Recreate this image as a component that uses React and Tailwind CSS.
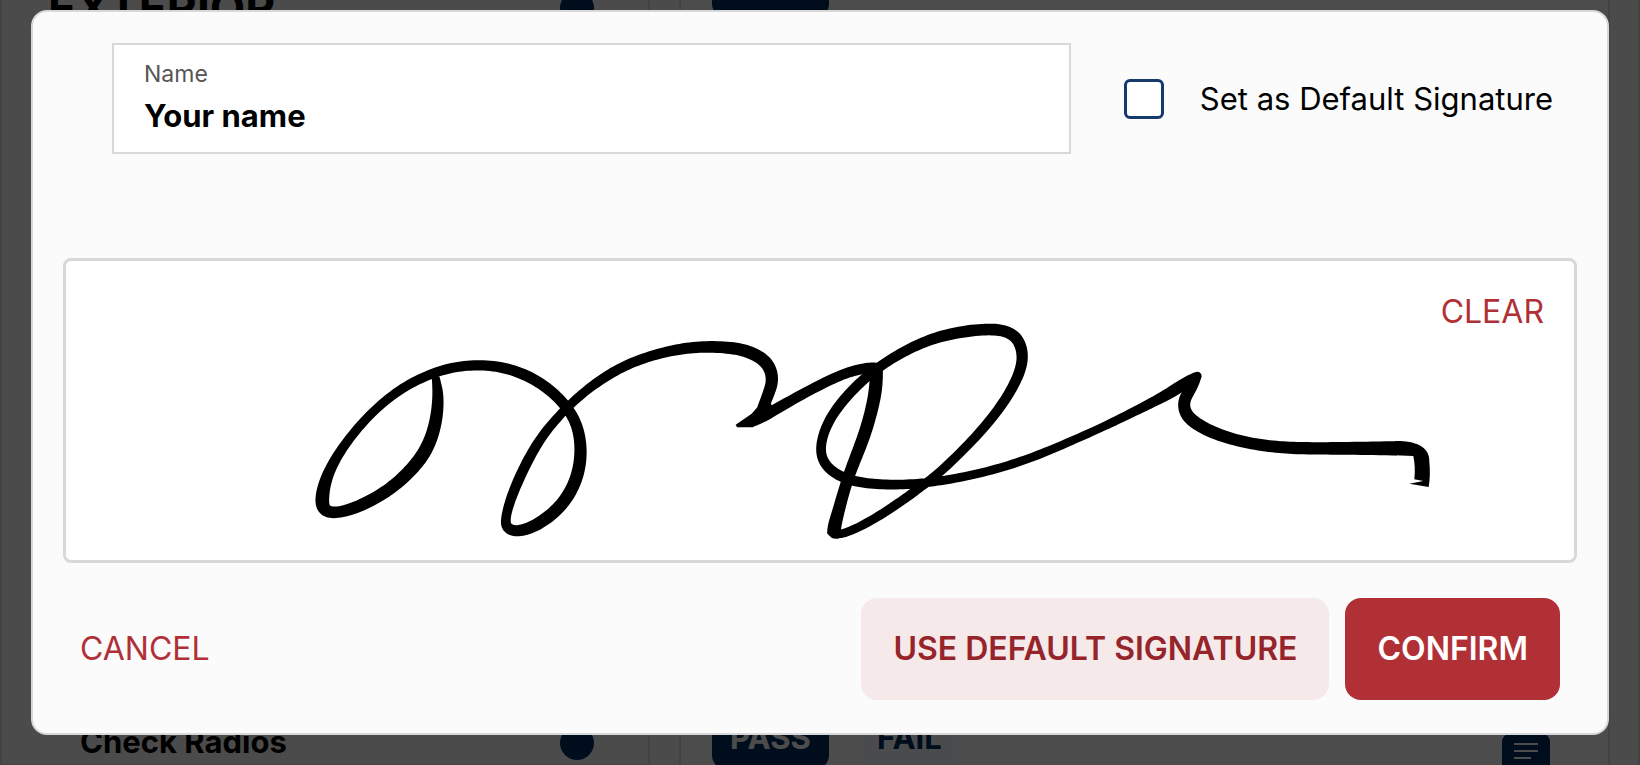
import { useState } from 'react';

// Pen strokes as [x, y, width] samples
const STROKES = [
  [
    [406, 196, 22], [412, 235, 30], [414, 275, 35], [406, 345, 38], [381, 415, 40], [346, 465, 40], [299, 513, 38],
    [240, 557, 37], [165, 594, 36], [105, 609, 34], [73, 599, 38], [66, 570, 42], [74, 520, 37], [101, 455, 31],
    [157, 373, 28], [228, 296, 27], [308, 233, 28], [392, 192, 29], [465, 171, 30], [540, 165, 31], [620, 174, 32],
    [700, 206, 34], [760, 249, 33], [806, 299, 33], [834, 355, 34], [843, 425, 37], [832, 500, 38], [797, 570, 38],
    [747, 620, 38], [695, 652, 36], [650, 664, 33], [621, 653, 32], [617, 625, 28], [631, 570, 30], [664, 490, 32],
    [709, 405, 30], [753, 345, 28], [804, 290, 27], [860, 240, 28], [930, 191, 30], [1000, 156, 30], [1080, 130, 31],
    [1160, 114, 33], [1240, 110, 35], [1320, 117, 37], [1370, 136, 38], [1405, 164, 38], [1417, 205, 37],
    [1411, 235, 36], [1399, 268, 35], [1385, 302, 32],
  ],
  [[1350, 342, 20], [1380, 325, 34], [1425, 299, 33], [1515, 248, 31], [1600, 205, 31], [1660, 182, 31], [1712, 173, 32], [1730, 176, 34]],
  [[1729, 178, 38], [1728, 230, 40], [1715, 300, 38], [1690, 385, 38], [1658, 465, 36], [1635, 532, 35], [1615, 605, 37], [1603, 650, 41], [1602, 672, 40]],
  [
    [1596, 672, 24], [1615, 673, 25], [1650, 664, 26], [1715, 631, 27], [1780, 590, 28], [1838, 549, 28], [1885, 514, 27],
    [1930, 477, 28], [2006, 403, 28], [2080, 320, 30], [2134, 240, 31], [2163, 175, 33], [2167, 130, 34], [2155, 91, 35],
    [2125, 66, 35], [2070, 57, 35], [1980, 66, 35], [1898, 86, 33], [1820, 120, 31], [1745, 165, 30], [1683, 215, 31],
    [1626, 275, 31], [1582, 340, 30], [1562, 405, 29], [1568, 450, 30], [1597, 485, 31], [1650, 511, 31], [1720, 522, 30],
    [1800, 524, 29], [1885, 518, 27], [1995, 500, 26], [2100, 474, 26], [2200, 441, 26], [2300, 399, 25], [2400, 355, 25],
    [2480, 316, 27], [2550, 281, 30], [2610, 249, 34], [2655, 220, 36], [2690, 197, 24],
  ],
  [
    [2692, 198, 25], [2677, 229, 34], [2656, 262, 36], [2652, 290, 36], [2664, 321, 38], [2708, 353, 38], [2775, 381, 36],
    [2855, 401, 35], [2940, 412, 36], [3020, 415, 37], [3140, 415, 38], [3290, 415, 43],
  ],
];

const spline = (a, b, c, d, t) =>
  0.5 * (2 * b + (c - a) * t + (2 * a - 5 * b + 4 * c - d) * t * t + (3 * b - a - 3 * c + d) * t * t * t);

// Moving average that narrows towards both ends, so the tips stay in place
function smooth(samples) {
  return samples.map((sample, i) => {
    const reach = Math.min(5, i, samples.length - 1 - i);
    const around = samples.slice(i - reach, i + reach + 1);
    return sample.map((_, k) => around.reduce((sum, s) => sum + s[k], 0) / around.length);
  });
}

function strokePath(points) {
  const raw = [];
  for (let i = 0; i < points.length - 1; i++) {
    const p0 = points[Math.max(i - 1, 0)];
    const p3 = points[Math.min(i + 2, points.length - 1)];
    for (let s = 0; s < 8; s++) {
      raw.push([0, 1, 2].map((k) => spline(p0[k], points[i][k], points[i + 1][k], p3[k], s / 8)));
    }
  }
  raw.push(points[points.length - 1]);

  const samples = smooth(raw);
  const left = [];
  const right = [];
  samples.forEach(([x, y, w], i) => {
    const prev = samples[Math.max(i - 1, 0)];
    const next = samples[Math.min(i + 1, samples.length - 1)];
    const dx = next[0] - prev[0];
    const dy = next[1] - prev[1];
    const len = Math.hypot(dx, dy) || 1;
    const nx = (-dy / len) * (w / 2);
    const ny = (dx / len) * (w / 2);
    left.push(`${(x + nx).toFixed(1)} ${(y + ny).toFixed(1)}`);
    right.unshift(`${(x - nx).toFixed(1)} ${(y - ny).toFixed(1)}`);
  });
  return `M${left.concat(right).join('L')}Z`;
}

function Signature() {
  return (
    <svg viewBox="-702 -147 4524 897" className="block w-full" role="img" aria-label="Signature">
      {STROKES.map((points, i) => (
        <path key={i} d={strokePath(points)} />
      ))}
      <path d="M1370 294L1355 311L1307 344L1311 352L1358 352L1425 312L1412 278Z" />
      <path d="M1700 159Q1745 160 1748 190L1708 205Z" />
      <path d="M1582 668Q1588 686 1615 686L1625 660Z" />
      <circle cx="2692" cy="198" r="13" />
      <path d="M3285 393C3340 392 3390 406 3388 455Q3392 495 3386 531L3328 521L3370 513L3343 508Q3347 470 3340 438L3285 436Z" />
    </svg>
  );
}

function Checklist() {
  return (
    <div className="flex h-screen overflow-hidden border-x-2 border-[#e2e2e2] bg-[#fafafa]" aria-hidden="true">
      <section className="flex w-[648px] shrink-0 flex-col justify-between border-r-2 border-[#e2e2e2]">
        <div className="-mt-5 flex items-center justify-between pr-[54px] pl-[46px]">
          <h2 className="text-[46px] leading-14 font-bold">EXTERIOR</h2>
          <span className="size-[34px] rounded-full bg-[#002c5e]" />
        </div>
        <div className="flex h-11 items-center justify-between border-b border-[#e2e2e2] pr-[54px] pl-[78px]">
          <span className="text-[31px] font-bold">Check Radios</span>
          <span className="size-[34px] rounded-full bg-[#002c5e]" />
        </div>
      </section>
      <section className="mr-7 ml-[29px] flex flex-1 flex-col justify-between border-x-2 border-[#e2e2e2] bg-[#fdfdfd]">
        <div className="-mt-12 flex pl-[31px]">
          <span className="h-16 w-[117px] rounded-xl bg-[#002c5e]" />
        </div>
        <div className="-mb-4 flex items-start justify-between pr-[58px] pl-[31px]">
          <div className="flex gap-8 text-[31px] leading-[60px] font-bold">
            <span className="w-[117px] rounded-xl bg-[#002c5e] text-center text-[#fdfdfd]">PASS</span>
            <span className="bg-[#f6fafd] px-4 text-[#002c5e]">FAIL</span>
          </div>
          <svg viewBox="0 0 48 48" className="mt-[25px] size-12">
            <rect width="48" height="48" rx="9" fill="#002c5e" />
            <path d="M12 11h24M12 18h24M12 25h17" stroke="#fdfdfd" strokeWidth="2" />
          </svg>
        </div>
      </section>
    </div>
  );
}

export default function App() {
  const [signed, setSigned] = useState(true);

  return (
    <div className="relative overflow-hidden font-['Inter',sans-serif] text-black">
      <Checklist />
      <div className="absolute inset-0 bg-black/70 px-[31px] py-[10px]">
        <div role="dialog" aria-modal="true" className="rounded-2xl border-2 border-[#d8d8d8] bg-[#fbfbfb] px-[30px] pt-[31px] pb-[33px]">
          <div className="flex items-center pr-6 pl-[49px]">
            <div className="flex h-[111px] flex-1 flex-col border-2 border-[#d8d8d8] bg-white px-[30px] pt-[15px]">
              <label htmlFor="name" className="text-[23px] leading-7 text-[#555]">Name</label>
              <input id="name" defaultValue="Your name" className="mt-2 w-full bg-transparent text-[31px] leading-10 font-bold outline-none" />
            </div>
            <input id="default" type="checkbox" className="ml-[53px] size-10 appearance-none rounded-md border-3 border-[#163a6e] bg-white checked:bg-[#163a6e]" />
            <label htmlFor="default" className="ml-9 text-[31px] leading-10">Set as Default Signature</label>
          </div>

          <div className="relative mt-[104px] rounded-lg border-3 border-[#d8d8d8] bg-white">
            <div className={signed ? '' : 'invisible'}>
              <Signature />
            </div>
            <button type="button" onClick={() => setSigned(false)} className="absolute top-[31px] right-[30px] text-[32px] leading-10 text-[#b13036]">
              CLEAR
            </button>
          </div>

          <div className="mt-[35px] flex items-center justify-between px-[17px]">
            <button type="button" className="text-[32px] leading-10 text-[#b13036]">CANCEL</button>
            <div className="flex gap-4 text-[32px] leading-10 font-semibold">
              <button type="button" className="rounded-2xl bg-[#f5e9ea] px-8 py-[31px] text-[#96242b]">USE DEFAULT SIGNATURE</button>
              <button type="button" className="rounded-2xl bg-[#b13036] px-8 py-[31px] text-white">CONFIRM</button>
            </div>
          </div>
        </div>
      </div>
    </div>
  );
}
